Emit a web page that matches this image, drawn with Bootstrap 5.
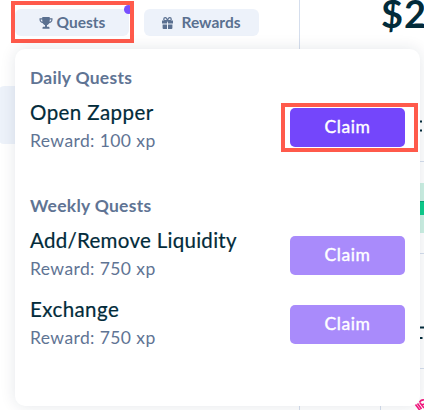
<!DOCTYPE html>
<html lang="en">
<head>
<meta charset="utf-8">
<meta name="viewport" content="width=device-width, initial-scale=1">
<title>Quests</title>
<link href="https://cdn.jsdelivr.net/npm/bootstrap@5.3.0/dist/css/bootstrap.min.css" rel="stylesheet">
<style>
body{font-family:Lato,"Open Sans",sans-serif;background:#fff;color:#022b3a}
.stage{width:424px;height:410px}
.tabs-row{height:49px;padding:9px 0 0 15px;gap:15px}
.tab-btn{width:115px;height:27px;padding:0 0 1px;border:0;border-radius:6px;background:#edf2fa;color:#5a7090;font-size:15.5px;font-weight:700;line-height:26px}
.tab-btn:first-child{width:114px}
.tab-btn svg{margin-top:1px}
.dot{left:124px;top:5px;width:9px;height:9px;border-radius:50%;background:#784ffe}
.outline{border:4px solid #ff5a4b}
.o-tab{left:11px;top:1px;width:123px;height:42px}
.o-claim{left:-9px;top:4px;width:137px;height:49px}
.balance{left:381px;top:-10px;font-size:38px;line-height:46px;font-weight:700;letter-spacing:1px}
.quest-panel{width:405px;height:357px;margin-left:15px;border-radius:10px;background:#fff;padding:16px 15px;box-shadow:0 0 16px rgba(20,40,60,.11)}
.heading{font-size:17.5px;line-height:26px;letter-spacing:.27px;font-weight:700;color:#5f7494;margin:0 0 8px}
.quest{height:53px}
.quest + .quest{margin-top:16px}
.group + .group{margin-top:41px}
.name{font-size:20.5px;line-height:26px;margin-bottom:3px;letter-spacing:.42px;-webkit-text-stroke:.2px}
.name-long{letter-spacing:.29px}
.reward{font-size:17.5px;line-height:26px;letter-spacing:.4px;color:#5f7494}
.claim{width:115px;height:39px;margin-top:9px;padding:0 0 2px;border:0;border-radius:5px;background:#7446fb;color:#fff;font-size:17.5px;line-height:37px;letter-spacing:.55px;font-weight:400;-webkit-text-stroke:.4px}
.claim:disabled{background:#a98bfb;color:#fff;opacity:1}
</style>
<script src="https://cdn.jsdelivr.net/npm/bootstrap@5.3.0/dist/js/bootstrap.bundle.min.js"></script>
</head>
<body class="overflow-hidden">
<div class="stage position-relative overflow-hidden">
  <svg class="position-absolute top-0 start-0" width="424" height="410" aria-hidden="true">
    <path d="M18 86H4q-2.500 0-4 1.500V142.500q1.500 1.500 4 1.500H18z" fill="#edf2fa"/>
    <path d="M299.5 0V410M380.5 400V410M415 161.5h9M415 253.5h9M415 368.5h9" stroke="#d5deed" fill="none"/>
    <path d="M416 183h8v50h-8z" fill="#cdf1e3"/>
    <path d="M416 201h8v14h-8z" fill="#0dce8c"/>
    <path d="M416 201.5h8" stroke="#0ba578"/>
    <path d="M418 121.500h4M418 130.500h4M418 327.500h6M418 338h4.500" stroke="#022b3a" stroke-width="2"/>
    <path d="M415.500 404.500l4.500 6M417.500 403.500l4 5.500M419.500 402l4.500 6M419.500 402q2-2.500 4.500-2M422 405l2-1" stroke="#f5147c" stroke-width="1.600" fill="none"/>
  </svg>
  <div class="balance position-absolute">$2</div>
  <div class="tabs-row d-flex">
    <button class="tab-btn btn d-flex align-items-center justify-content-center" type="button">
      <svg class="me-1" width="14" height="12" viewBox="0 0 14 12" fill="#5a7090"><path d="M3.300 0h7.400v1.300H13.500v1.500c0 1.800-1.500 3-3.300 3.400C9.600 7.200 8.600 7.900 8 8.100v1.700h1.300c.8 0 1.200.5 1.200 1.200v.8h-7V11c0-.7.400-1.200 1.200-1.200H6V8.100C5.400 7.900 4.400 7.200 3.800 6.200 2 5.800.5 4.600.5 2.800V1.300h2.800zM1.600 2.400c0 1.200.7 2 1.800 2.400L3.200 2.400zm9.200 0-.2 2.400c1.100-.4 1.800-1.200 1.800-2.400z"/></svg><span>Quests</span>
    </button>
    <button class="tab-btn btn d-flex align-items-center justify-content-center" type="button">
      <svg class="me-2" width="11" height="12" viewBox="0 0 11 12" fill="#5a7090"><path d="M0 3.600h5v3H0zM6 3.600h5v3H6zM.6 7.500H5V12H1.500Q.6 12 .6 11zM6 7.500h4.400V11q0 1-.9 1H6z"/><path d="M5.500 3.600H3.400C1.100 3.600 1.400.7 3.200.7c1.200 0 1.900 1.500 2.300 2.900C5.900 2.200 6.600.7 7.800.7c1.800 0 2.100 2.900-.2 2.900z" fill="none" stroke="#5a7090" stroke-width="1.200"/></svg><span>Rewards</span>
    </button>
  </div>
  <span class="dot position-absolute"></span>
  <div class="outline o-tab position-absolute"></div>
  <div class="quest-panel position-relative">
    <section class="group">
      <h2 class="heading">Daily Quests</h2>
      <div class="quest d-flex justify-content-between">
        <div><div class="name">Open Zapper</div><div class="reward">Reward: 100 xp</div></div>
        <div class="position-relative"><button class="claim btn" type="button">Claim</button><div class="outline o-claim position-absolute"></div></div>
      </div>
    </section>
    <section class="group">
      <h2 class="heading">Weekly Quests</h2>
      <div class="quest d-flex justify-content-between">
        <div><div class="name name-long">Add/Remove Liquidity</div><div class="reward">Reward: 750 xp</div></div>
        <div><button class="claim btn" type="button" disabled>Claim</button></div>
      </div>
      <div class="quest d-flex justify-content-between">
        <div><div class="name">Exchange</div><div class="reward">Reward: 750 xp</div></div>
        <div><button class="claim btn" type="button" disabled>Claim</button></div>
      </div>
    </section>
  </div>
</div>
</body>
</html>
